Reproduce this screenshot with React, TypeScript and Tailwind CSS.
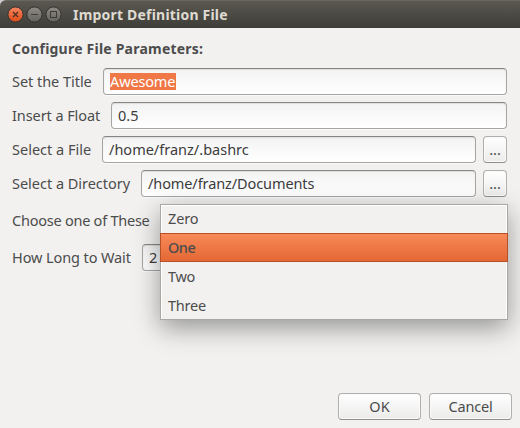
import type { ReactNode } from 'react';

const field =
  'h-[27px] rounded-[4px] border border-[#a5a5a3] border-t-[#858583] bg-linear-to-b from-[#f3f3f3] to-white shadow-[inset_0_1px_1px_#dededc,0_1px_0_#fafafa] flex items-center pl-[6px] pb-[2px] text-[#3c3c3c] whitespace-nowrap';
const button =
  'h-[27px] rounded-[4px] border border-[#b0afad] border-b-[#8e8e8c] bg-linear-to-b from-white to-[#ebebea] shadow-[inset_0_0_0_1px_#fafafa] flex items-center justify-center pb-[2px]';

function Row({ label, gap, spacing, children }: { label: string; gap: string; spacing: string; children?: ReactNode }) {
  return (
    <div className="flex h-[27px] items-center">
      <span className={`${gap} ${spacing} shrink-0 pb-[2px] whitespace-nowrap`}>{label}</span>
      {children}
    </div>
  );
}

function WindowButton({ kind }: { kind: 'close' | 'min' | 'max' }) {
  const close = kind === 'close';
  return (
    <svg width="17" height="17" viewBox="0 0 17 17" fill="none">
      <defs>
        <linearGradient id={kind} x1="0" y1="0" x2="0" y2="1">
          <stop offset="0" stopColor={close ? '#f68662' : '#8d8b84'} />
          <stop offset="1" stopColor={close ? '#df4b16' : '#65635d'} />
        </linearGradient>
      </defs>
      <circle cx="8.5" cy="8.5" r="7.6" fill={`url(#${kind})`} stroke="#33322d" />
      {close && <path d="M6 6l5 5M11 6l-5 5" stroke="#51301f" strokeWidth="1.3" />}
      {kind === 'min' && <path d="M5 8.5h7" stroke="#3c3b37" />}
      {kind === 'max' && <rect x="5.5" y="5.5" width="6" height="6" stroke="#3c3b37" />}
    </svg>
  );
}

export default function App() {
  return (
    <div className="relative flex h-[428px] w-[520px] flex-col overflow-hidden bg-[#f2f1f0] font-['Noto_Sans','Open_Sans',sans-serif] text-[14.5px] leading-[20px] text-[#4c4c4c]">
      <div className="bg-[#cfcfcf]">
        <header className="flex h-[28px] items-center rounded-tl-[6px] border-t border-[#686760] bg-linear-to-b from-[#5a5850] to-[#3e3d39] pl-[7px]">
          <div className="flex gap-[2px]">
            <WindowButton kind="close" />
            <WindowButton kind="min" />
            <WindowButton kind="max" />
          </div>
          <h1 className="ml-[11px] text-[14px] font-bold tracking-[0.2px] text-[#dfdbd2]">Import Definition File</h1>
        </header>
      </div>

      <main className="flex flex-1 flex-col pl-[12px] pr-[13px]">
        <h2 className="mt-[11px] text-[14px] font-bold tracking-[0.22px]">Configure File Parameters:</h2>
        <div className="mt-[9px] flex flex-col gap-[7px]">
          <Row label="Set the Title" gap="w-[91px]" spacing="tracking-[-0.04px]">
            <div className={`${field} flex-1`}>
              <span className="mt-px h-[17px] w-[66px] bg-[#f07746] leading-[16px] tracking-[-0.14px] text-white">Awesome</span>
            </div>
          </Row>
          <Row label="Insert a Float" gap="w-[99px]" spacing="tracking-[-0.08px]">
            <div className={`${field} flex-1`}>0.5</div>
          </Row>
          <Row label="Select a File" gap="w-[90px]" spacing="tracking-[0px]">
            <div className={`${field} flex-1`}>/home/franz/.bashrc</div>
            <button className={`${button} ml-[7px] w-[24px]`}>...</button>
          </Row>
          <Row label="Select a Directory" gap="w-[129px]" spacing="tracking-[-0.02px]">
            <div className={`${field} flex-1 tracking-[-0.1px]`}>/home/franz/Documents</div>
            <button className={`${button} ml-[7px] w-[24px]`}>...</button>
          </Row>
        </div>
        <div className="mt-[10px] flex flex-col gap-[10px]">
          <Row label="Choose one of These" gap="w-[148px]" spacing="tracking-[-0.24px]" />
          <Row label="How Long to Wait" gap="w-[130px]" spacing="tracking-[-0.1px]">
            <div className={`${field} w-[90px]`}>2</div>
          </Row>
        </div>
      </main>

      <footer className="mb-[8px] flex justify-end gap-[8px] pr-[8px]">
        <button className={`${button} w-[83px]`}>OK</button>
        <button className={`${button} w-[83px] tracking-[-0.2px]`}>Cancel</button>
      </footer>

      <ul className="absolute left-[160px] top-[204px] h-[116px] w-[348px] border border-[#a9a7a4] bg-[#f2f1f0] shadow-[inset_1px_1px_0_#fff,inset_-1px_0_0_#fff,0_8px_24px_rgba(0,0,0,0.38)]">
        <li className="flex h-[28px] items-center pb-[2px] pl-[7px] tracking-[-0.1px]">Zero</li>
        <li className="-mx-px flex h-[29px] items-center border border-[#b65027] bg-linear-to-b from-[#f88958] to-[#e36833] pb-px pl-[7px] font-medium tracking-[-0.5px]">One</li>
        <li className="flex h-[29px] items-center pb-[2px] pl-[7px] tracking-[-0.3px]">Two</li>
        <li className="flex h-[28px] items-center pl-[7px] tracking-[-0.2px]">Three</li>
      </ul>
    </div>
  );
}
